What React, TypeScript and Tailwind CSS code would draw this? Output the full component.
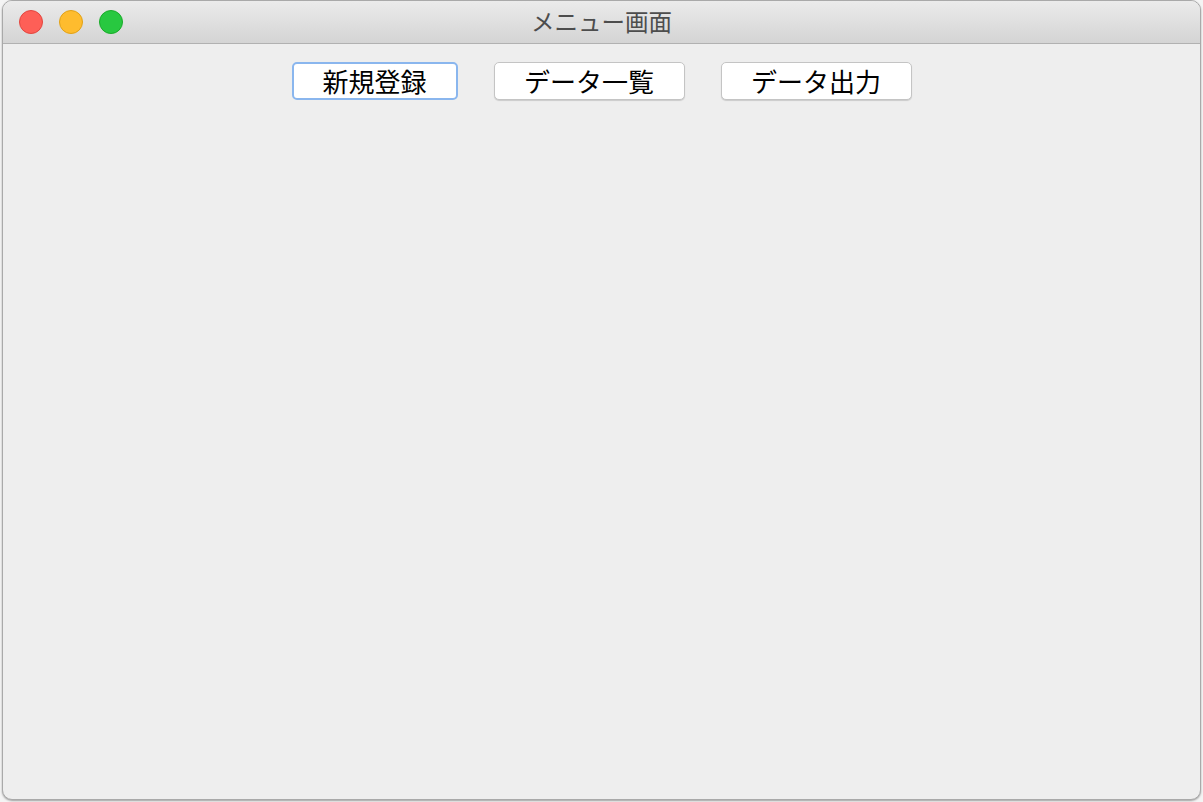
export default function App() {
  const font = { fontFamily: '"Noto Sans CJK JP", "Noto Sans", sans-serif' };
  return (
    <div className="w-[1203px] h-[802px] bg-[#f4f4f4] overflow-hidden" style={font}>
      <div className="ml-[2px] w-[1199px] h-[800px] rounded-[10px] bg-[#eeeeee] border border-[#a9a9a9] shadow-[0_1px_2px_rgba(0,0,0,0.35)] overflow-hidden flex flex-col">
        <div className="relative h-[43px] shrink-0 bg-gradient-to-b from-[#ebebeb] to-[#d4d4d4] border-b border-[#b1b1b1] flex items-center justify-center">
          <div className="absolute left-[16px] top-[9px] flex gap-[16px]">
            <div className="w-[24px] h-[24px] rounded-full bg-[#fe5f57] border border-[#e2463f]" />
            <div className="w-[24px] h-[24px] rounded-full bg-[#febc2e] border border-[#e1a116]" />
            <div className="w-[24px] h-[24px] rounded-full bg-[#28c840] border border-[#1aab29]" />
          </div>
          <span className="text-[23.5px] leading-none text-[#4d4d4d]">メニュー画面</span>
        </div>
        <div className="flex justify-center gap-[36px] pt-[18px]">
          <button className="w-[166px] h-[38px] rounded-[5px] bg-white border-2 border-[#8ab6ee] text-[26px] leading-none text-black flex items-center justify-center">
            新規登録
          </button>
          <button className="w-[191px] h-[38px] rounded-[5px] bg-white border border-[#c4c4c4] shadow-[0_1px_1px_rgba(0,0,0,0.15)] text-[26px] leading-none text-black flex items-center justify-center">
            データ一覧
          </button>
          <button className="w-[191px] h-[38px] rounded-[5px] bg-white border border-[#c4c4c4] shadow-[0_1px_1px_rgba(0,0,0,0.15)] text-[26px] leading-none text-black flex items-center justify-center">
            データ出力
          </button>
        </div>
      </div>
    </div>
  );
}
